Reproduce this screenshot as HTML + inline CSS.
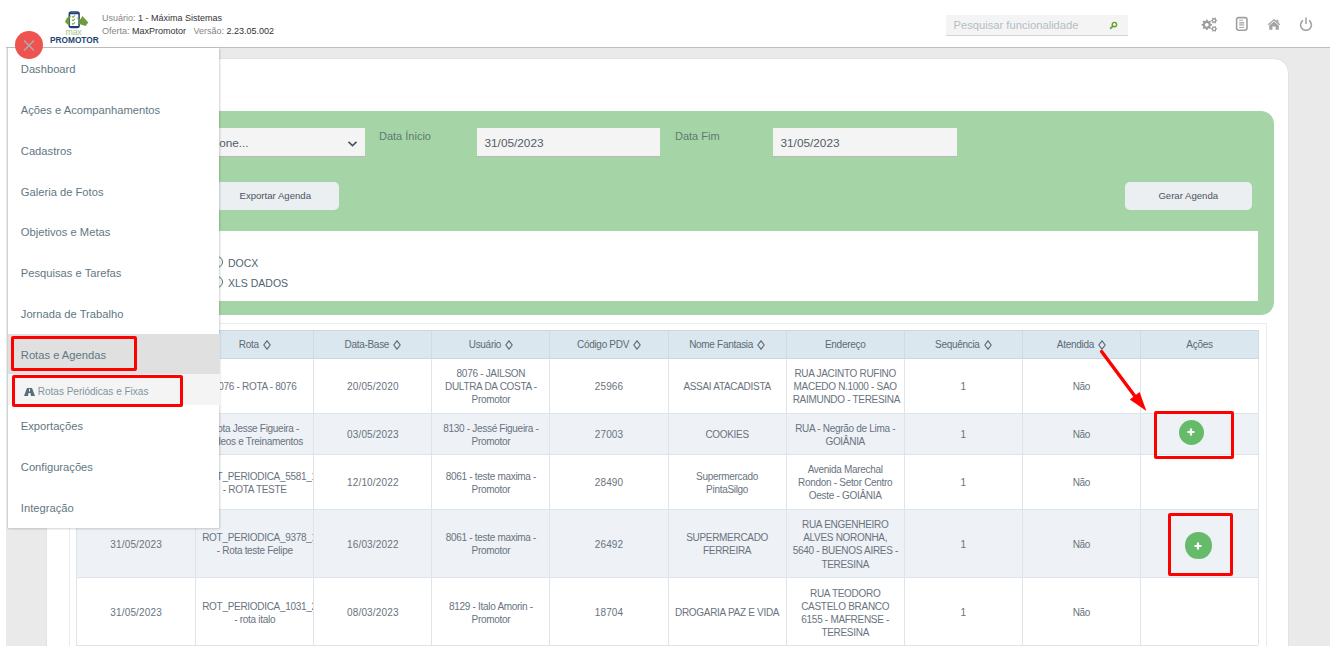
<!DOCTYPE html>
<html><head><meta charset="utf-8">
<style>
*{box-sizing:border-box;margin:0;padding:0}
html,body{width:1337px;height:653px;overflow:hidden;background:#fff;font-family:"Liberation Sans",sans-serif;position:relative}
.a{position:absolute}
.hdrline{left:6px;top:46.8px;width:1324px;height:1.5px;background:#bebebe}
.page{left:6px;top:48px;width:1324px;height:598px;background:#eaeaea;overflow:hidden}
.card{left:46px;top:58px;width:1243px;height:620px;background:#fff;border:1px solid #dfe2e8;border-radius:15px}
.green{left:60px;top:111px;width:1214px;height:204px;background:#a5d5a6;border-radius:13px}
.inp{background:#f4f4f4;border-bottom:1px solid #b9b9b9;height:28.8px;top:128px}
.lbl{font-size:11px;color:#5f7a72;top:130px}
.itx{font-size:11.8px;color:#555e66}
.btn{background:#eceff2;border-radius:5px;height:27.5px;top:182px;width:126.5px;font-size:9.6px;color:#4b5560;text-align:center;line-height:27.5px}
.rbox{left:76px;top:230.5px;width:1182px;height:70.5px;background:#fff}
.tcont{left:68.5px;top:322.5px;width:1198.5px;height:340px;border:1px solid #e8ebef;background:#fff}
.trow{left:76px;width:1183.1px;display:grid;grid-template-columns:119.2px repeat(9,118.1px);border-top:1px solid #dde5eb;border-left:1px solid #dde5eb}
.tc{border-right:1px solid #dde5eb;display:flex;align-items:center;justify-content:center;text-align:center;overflow:hidden;font-size:10px;line-height:13.2px;color:#69737e;letter-spacing:-0.3px;padding:1.6px 6px 0;white-space:nowrap}
.tc>div{width:100%}
.nw{white-space:nowrap}
.r5 .tc{padding-top:3px}
.num{letter-spacing:0.15px}
.thead{background:#dbe7ee;color:#5d6a75}
.thead .tc{color:#5d6a75;padding-top:0;border-right-color:#cfdce4}
.thead{border-top-color:#cbd8e0;border-left-color:#cfdce4}
.alt{background:#eef1f6}
.srt{display:inline-block;width:8px;height:10px;margin-left:4px;vertical-align:-1px;background:no-repeat}
.hd{font-size:9px;color:#858585;white-space:nowrap}
.hd b{font-weight:normal;color:#333}
.srch{left:946px;top:15px;width:182px;height:21px;background:#f4f4f4;border-bottom:1.5px solid #cdd6dc}
.srch span{position:absolute;left:7.5px;top:4px;font-size:11.2px;color:#b3bec5;white-space:nowrap}
.menu{left:7px;top:48px;width:212.3px;height:479.5px;background:#fff;border-left:1px solid #d0d4d8;box-shadow:1px 1px 2px rgba(0,0,0,0.18)}
.mi{position:absolute;left:0;width:212px;height:40.8px;font-size:11.2px;color:#5f7782;padding-left:12.8px;padding-top:1.3px;line-height:40.8px;white-space:nowrap}
.circ{left:14.5px;top:31px;width:28px;height:28px;border-radius:50%;background:#ef5350}
.rb{position:absolute;border:3px solid #ff0000;border-radius:2px}
</style></head><body>

<svg class="a" style="left:60px;top:8px" width="35" height="24" viewBox="0 0 35 24">
<rect x="9.3" y="4.1" width="9.8" height="15.4" rx="2" fill="none" stroke="#1c3f78" stroke-width="1.5"/>
<path d="M9.3 5.5 H19.1 M9.3 18.6 H19.1" stroke="#1c3f78" stroke-width="1.4"/>
<path d="M5.2 13.2 L6.8 10.2 L9 8.2 L10.8 7.2 L10.6 9 L9.6 10.4 L9.4 17.4 L8 16.8 L5.4 14.4 Z" fill="#6f9a3f"/>
<path d="M12 8.3l1 1 2-2M12 11.8l1 1 2-2M12 15.3l1 1 2-2" stroke="#7aa048" stroke-width="1.1" fill="none"/>
<path d="M16.3 9.3 L20.6 11.2 L22.4 7.9 L28.3 14.6 L25.5 18 L17.6 15.4 L19.8 13.4 Z" fill="#6f9a3f"/>
</svg>
<div class="a" style="left:65.5px;top:28px;font-size:8.8px;color:#a9c184;line-height:9px;letter-spacing:-0.2px">max</div>
<div class="a" style="left:50px;top:35.7px;font-size:8.3px;font-weight:bold;color:#1a4577;line-height:9px;letter-spacing:0">PROMOTOR</div>
<div class="a hd" style="left:102px;top:12.9px">Usuário: <b>1 - Máxima Sistemas</b></div>
<div class="a hd" style="left:102px;top:26.4px">Oferta: <b>MaxPromotor</b>&nbsp;&nbsp; Versão: <b>2.23.05.002</b></div>

<svg class="a" style="left:1199px;top:15px" width="20" height="18" viewBox="0 0 20 18"><path fill-rule="evenodd" fill="#9b9b9b" d="M11.66 8.74 L13.06 9.14 L13.06 10.46 L11.66 10.86 L11.27 11.78 L11.99 13.05 L11.05 13.99 L9.78 13.27 L8.86 13.66 L8.46 15.06 L7.14 15.06 L6.74 13.66 L5.82 13.27 L4.55 13.99 L3.61 13.05 L4.33 11.78 L3.94 10.86 L2.54 10.46 L2.54 9.14 L3.94 8.74 L4.33 7.82 L3.61 6.55 L4.55 5.61 L5.82 6.33 L6.74 5.94 L7.14 4.54 L8.46 4.54 L8.86 5.94 L9.78 6.33 L11.05 5.61 L11.99 6.55 L11.27 7.82Z M9.70 9.80 A1.9 1.9 0 1 0 5.90 9.80 A1.9 1.9 0 1 0 9.70 9.80Z M17.16 4.73 L18.16 4.98 L18.16 6.02 L17.16 6.27 L16.80 6.90 L17.08 7.89 L16.18 8.41 L15.47 7.67 L14.73 7.67 L14.02 8.41 L13.12 7.89 L13.40 6.90 L13.04 6.27 L12.04 6.02 L12.04 4.98 L13.04 4.73 L13.40 4.10 L13.12 3.11 L14.02 2.59 L14.73 3.33 L15.47 3.33 L16.18 2.59 L17.08 3.11 L16.80 4.10Z M16.20 5.50 A1.1 1.1 0 1 0 14.00 5.50 A1.1 1.1 0 1 0 16.20 5.50Z M17.16 13.03 L18.16 13.28 L18.16 14.32 L17.16 14.57 L16.80 15.20 L17.08 16.19 L16.18 16.71 L15.47 15.97 L14.73 15.97 L14.02 16.71 L13.12 16.19 L13.40 15.20 L13.04 14.57 L12.04 14.32 L12.04 13.28 L13.04 13.03 L13.40 12.40 L13.12 11.41 L14.02 10.89 L14.73 11.63 L15.47 11.63 L16.18 10.89 L17.08 11.41 L16.80 12.40Z M16.20 13.80 A1.1 1.1 0 1 0 14.00 13.80 A1.1 1.1 0 1 0 16.20 13.80Z"/></svg>
<svg class="a" style="left:1235px;top:16px" width="13" height="16" viewBox="0 0 13 16">
<rect x="1.6" y="1.6" width="10.4" height="12.6" rx="2.2" fill="none" stroke="#a0a0a0" stroke-width="1.6"/>
<path d="M4.2 4.3h3.8M4.2 6.6h5M4.2 8h5M4.2 9.1h5M4.2 11.5h5" stroke="#a8a8a8" stroke-width="1"/>
</svg>
<svg class="a" style="left:1267px;top:19px" width="14" height="11" viewBox="0 0 14 11">
<path d="M1.2 5.8 L7 0.8 L12.8 5.8" fill="none" stroke="#a3a3a3" stroke-width="1.3"/>
<path d="M7 2.4 L11.8 6.6 L11.8 10.8 L8.6 10.8 L8.6 7.5 L5.4 7.5 L5.4 10.8 L2.2 10.8 L2.2 6.6 Z" fill="#a3a3a3"/><rect x="9.6" y="0.8" width="1.7" height="3" fill="#a3a3a3"/>
</svg>
<svg class="a" style="left:1299px;top:17px" width="14" height="14" viewBox="0 0 14 14">
<path d="M4 3.4 A5.4 5.4 0 1 0 10 3.4" fill="none" stroke="#a0a0a0" stroke-width="1.5"/><path d="M7 0.5 V7" stroke="#a0a0a0" stroke-width="1.5"/>
</svg>
<div class="a srch"><span>Pesquisar funcionalidade</span>
<svg style="position:absolute;left:163px;top:6px" width="9" height="9" viewBox="0 0 9 9"><circle cx="5.4" cy="3.6" r="2.2" fill="none" stroke="#5ea32e" stroke-width="1.4"/><path d="M3.8 5.2 L1.6 7.4" stroke="#5ea32e" stroke-width="1.7" stroke-linecap="round"/></svg>
</div>

<div class="a hdrline"></div>
<div class="a page"></div>
<div class="a card"></div>
<div class="a green"></div>
<div class="a inp" style="left:181px;width:184px"></div>
<div class="a lbl" style="left:379px">Data Ínicio</div>
<div class="a inp" style="left:477px;width:183px"></div>
<div class="a itx" style="left:484.5px;top:136.3px">31/05/2023</div>
<div class="a lbl" style="left:675px">Data Fim</div>
<div class="a inp" style="left:773px;width:184px"></div>
<div class="a itx" style="left:780.5px;top:136.3px">31/05/2023</div>
<div class="a btn" style="left:212px">Exportar Agenda</div>
<div class="a btn" style="left:1125px">Gerar Agenda</div>
<div class="a rbox"></div>
<div class="a tcont"></div>
<div class="a itx" style="left:187px;top:136px">Selecione...</div>
<svg class="a" style="left:346.5px;top:139.5px" width="11" height="8" viewBox="0 0 11 8"><path d="M1.5 1.8 L5.5 5.6 L9.5 1.8" fill="none" stroke="#3f5561" stroke-width="1.6"/></svg>
<div class="a" style="left:210.5px;top:255.5px;width:12px;height:12px;border:1.8px solid #546e7a;border-radius:50%"></div>
<div class="a" style="left:210.5px;top:275.5px;width:12px;height:12px;border:1.8px solid #546e7a;border-radius:50%"></div>
<div class="a" style="left:228px;top:256.5px;font-size:10.5px;color:#4f6470;white-space:nowrap">DOCX</div>
<div class="a" style="left:228px;top:276.5px;font-size:10.5px;color:#4f6470;white-space:nowrap">XLS DADOS</div>

<div class='a trow thead' style='top:330px;height:28px'>
<div class='tc'><span>Data</span><svg class="srt" viewBox="0 0 8 10"><path d="M4 0.8 L7.2 5 L4 9.2 L0.8 5 Z" fill="none" stroke="#5d6a75" stroke-width="1.1"/></svg></div>
<div class='tc'><span>Rota</span><svg class="srt" viewBox="0 0 8 10"><path d="M4 0.8 L7.2 5 L4 9.2 L0.8 5 Z" fill="none" stroke="#5d6a75" stroke-width="1.1"/></svg></div>
<div class='tc'><span>Data-Base</span><svg class="srt" viewBox="0 0 8 10"><path d="M4 0.8 L7.2 5 L4 9.2 L0.8 5 Z" fill="none" stroke="#5d6a75" stroke-width="1.1"/></svg></div>
<div class='tc'><span>Usuário</span><svg class="srt" viewBox="0 0 8 10"><path d="M4 0.8 L7.2 5 L4 9.2 L0.8 5 Z" fill="none" stroke="#5d6a75" stroke-width="1.1"/></svg></div>
<div class='tc'><span>Código PDV</span><svg class="srt" viewBox="0 0 8 10"><path d="M4 0.8 L7.2 5 L4 9.2 L0.8 5 Z" fill="none" stroke="#5d6a75" stroke-width="1.1"/></svg></div>
<div class='tc'><span>Nome Fantasia</span><svg class="srt" viewBox="0 0 8 10"><path d="M4 0.8 L7.2 5 L4 9.2 L0.8 5 Z" fill="none" stroke="#5d6a75" stroke-width="1.1"/></svg></div>
<div class='tc'><span>Endereço</span></div>
<div class='tc'><span>Sequência</span><svg class="srt" viewBox="0 0 8 10"><path d="M4 0.8 L7.2 5 L4 9.2 L0.8 5 Z" fill="none" stroke="#5d6a75" stroke-width="1.1"/></svg></div>
<div class='tc'><span>Atendida</span><svg class="srt" viewBox="0 0 8 10"><path d="M4 0.8 L7.2 5 L4 9.2 L0.8 5 Z" fill="none" stroke="#5d6a75" stroke-width="1.1"/></svg></div>
<div class='tc'><span>Ações</span></div>
</div>
<div class='a trow' style='top:358px;height:55px;border-top-color:#cbd8e0'>
<div class='tc num'><div>31/05/2023</div></div>
<div class='tc'><div>8076 - ROTA - 8076</div></div>
<div class='tc num'><div>20/05/2020</div></div>
<div class='tc'><div>8076 - JAILSON<br>DULTRA DA COSTA -<br>Promotor</div></div>
<div class='tc num'><div>25966</div></div>
<div class='tc'><div>ASSAI ATACADISTA</div></div>
<div class='tc'><div>RUA JACINTO RUFINO<br>MACEDO N.1000 - SAO<br>RAIMUNDO - TERESINA</div></div>
<div class='tc num'><div>1</div></div>
<div class='tc'><div>Não</div></div>
<div class='tc'><div></div></div>
</div>
<div class='a trow alt' style='top:413px;height:41px'>
<div class='tc num'><div>31/05/2023</div></div>
<div class='tc'><div>Rota Jesse Figueira -<br>Vídeos e Treinamentos</div></div>
<div class='tc num'><div>03/05/2023</div></div>
<div class='tc'><div>8130 - Jessé Figueira -<br>Promotor</div></div>
<div class='tc num'><div>27003</div></div>
<div class='tc'><div>COOKIES</div></div>
<div class='tc'><div>RUA - Negrão de Lima -<br>GOIÂNIA</div></div>
<div class='tc num'><div>1</div></div>
<div class='tc'><div>Não</div></div>
<div class='tc'><div></div></div>
</div>
<div class='a trow' style='top:454px;height:55px'>
<div class='tc num'><div>31/05/2023</div></div>
<div class='tc'><div><span class='nw'>ROT_PERIODICA_5581_1111</span><br>- ROTA TESTE</div></div>
<div class='tc num'><div>12/10/2022</div></div>
<div class='tc'><div>8061 - teste maxima -<br>Promotor</div></div>
<div class='tc num'><div>28490</div></div>
<div class='tc'><div>Supermercado<br>PintaSilgo</div></div>
<div class='tc'><div>Avenida Marechal<br>Rondon - Setor Centro<br>Oeste - GOIÂNIA</div></div>
<div class='tc num'><div>1</div></div>
<div class='tc'><div>Não</div></div>
<div class='tc'><div></div></div>
</div>
<div class='a trow alt' style='top:509px;height:68px'>
<div class='tc num'><div>31/05/2023</div></div>
<div class='tc'><div><span class='nw'>ROT_PERIODICA_9378_1555</span><br>- Rota teste Felipe</div></div>
<div class='tc num'><div>16/03/2022</div></div>
<div class='tc'><div>8061 - teste maxima -<br>Promotor</div></div>
<div class='tc num'><div>26492</div></div>
<div class='tc'><div>SUPERMERCADO<br>FERREIRA</div></div>
<div class='tc'><div>RUA ENGENHEIRO<br>ALVES NORONHA,<br>5640 - BUENOS AIRES -<br>TERESINA</div></div>
<div class='tc num'><div>1</div></div>
<div class='tc'><div>Não</div></div>
<div class='tc'><div></div></div>
</div>
<div class='a trow r5' style='top:577px;height:68px'>
<div class='tc num'><div>31/05/2023</div></div>
<div class='tc'><div><span class='nw'>ROT_PERIODICA_1031_2888</span><br>- rota italo</div></div>
<div class='tc num'><div>08/03/2023</div></div>
<div class='tc'><div>8129 - Italo Amorin -<br>Promotor</div></div>
<div class='tc num'><div>18704</div></div>
<div class='tc'><div>DROGARIA PAZ E VIDA</div></div>
<div class='tc'><div>RUA TEODORO<br>CASTELO BRANCO<br>6155 - MAFRENSE -<br>TERESINA</div></div>
<div class='tc num'><div>1</div></div>
<div class='tc'><div>Não</div></div>
<div class='tc'><div></div></div>
</div>

<div class="a" style="left:76px;top:644.5px;width:1182px;height:1px;background:#dde5eb"></div>
<div class="a menu">
<div class="mi" style="top:0">Dashboard</div>
<div class="mi" style="top:40.8px">Ações e Acompanhamentos</div>
<div class="mi" style="top:81.6px">Cadastros</div>
<div class="mi" style="top:122.4px">Galeria de Fotos</div>
<div class="mi" style="top:163.2px">Objetivos e Metas</div>
<div class="mi" style="top:204px">Pesquisas e Tarefas</div>
<div class="mi" style="top:244.8px">Jornada de Trabalho</div>
<div class="mi" style="top:285.8px;background:#e0e0e0;height:40.2px;line-height:40.2px">Rotas e Agendas</div>
<div class="mi" style="top:326px;height:30.8px;background:#f4f4f4;line-height:30.8px;font-size:10px;color:#7f949e;padding-left:16px;padding-top:2.5px">
<svg style="position:relative;top:1px" width="11" height="8" viewBox="0 0 11 8"><path d="M0 8 L3 0 L8 0 L11 8 L7 8 L6.5 5 L4.5 5 L4 8 Z" fill="#546e7a"/><rect x="5" y="1" width="1" height="2.5" fill="#f4f4f4"/></svg> Rotas Periódicas e Fixas</div>
<div class="mi" style="top:356.8px">Exportações</div>
<div class="mi" style="top:397.6px">Configurações</div>
<div class="mi" style="top:438.4px">Integração</div>
</div>
<div class="a circ"><svg width="28" height="28" viewBox="0 0 28 28"><path d="M9 9.5 L19 19.5 M19 9.5 L9 19.5" stroke="#a9aeae" stroke-width="1.5"/></svg></div>
<div class="rb" style="left:11px;top:336px;width:125.5px;height:34.5px"></div>
<div class="rb" style="left:12px;top:375px;width:170.5px;height:32px"></div>
<div class="rb" style="left:1154px;top:411px;width:79.5px;height:47.5px;border-width:3.5px"></div>
<div class="rb" style="left:1168px;top:513px;width:64.5px;height:62.5px;border-width:3.8px"></div>
<div class="a" style="left:1178.7px;top:419.8px;width:25px;height:25px;border-radius:50%;background:#66bb6a"></div>
<div class="a" style="left:1185.2px;top:532.3px;width:26.4px;height:26.4px;border-radius:50%;background:#66bb6a"></div>

<svg class="a" style="left:1187.2px;top:428.3px" width="8" height="8" viewBox="0 0 8 8"><path d="M4 0.5V7.5M0.5 4H7.5" stroke="#fff" stroke-width="2.2"/></svg>
<svg class="a" style="left:1194.4px;top:541.5px" width="8" height="8" viewBox="0 0 8 8"><path d="M4 0.5V7.5M0.5 4H7.5" stroke="#fff" stroke-width="2.2"/></svg>
<svg class="a" style="left:0;top:0" width="1337" height="653"><path d="M1101.6 351.6 L1137 399" stroke="#ff0000" stroke-width="3.4" stroke-linecap="round"/><path d="M1146.4 411.1 L1129.8 399.5 L1139.6 392.1 Z" fill="#ff0000"/></svg>
<div class="a" style="left:0;top:646px;width:1337px;height:7px;background:#fff"></div>
<div class="a" style="left:1330px;top:0;width:7px;height:653px;background:#fff"></div>

</body></html>
